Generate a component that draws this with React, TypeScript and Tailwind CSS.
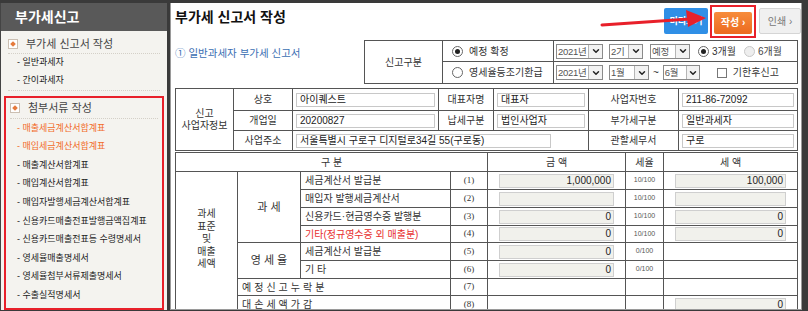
import { ChevronDown } from 'lucide-react';

const FONT = "font-['Liberation_Sans','Noto_Sans_CJK_KR',sans-serif]";
const TD = 'border border-[#555] p-0';

function Bullet() {
  return (
    <span className="w-[10px] h-[10px] border border-[#cbbfb2] bg-white flex items-center justify-center shrink-0">
      <span className="w-[4px] h-[4px] bg-[#e57a3c] rotate-45" />
    </span>
  );
}

function Select({ label, textW, btnW }: { label: string; textW: string; btnW: string }) {
  return (
    <span className="inline-flex h-[15px] border border-[#8a8a8a] bg-white whitespace-nowrap">
      <span className={`${textW} pl-[1px] text-[9.5px] tracking-[-0.3px] leading-[13px] text-[#555]`}>{label}</span>
      <span className={`${btnW} border-l border-[#b5b5b5] bg-[#f2f2f2] flex items-center justify-center`}>
        <ChevronDown className="w-[10px] h-[10px] text-[#222]" strokeWidth={3.5} />
      </span>
    </span>
  );
}

function Radio({ on, dim }: { on?: boolean; dim?: boolean }) {
  return (
    <span
      className={`w-[11px] h-[11px] rounded-full border flex items-center justify-center shrink-0 ${
        dim ? 'border-[#c8c8c8] bg-[#eee]' : 'border-[#666] bg-white'
      }`}>
      {on && <span className="w-[5px] h-[5px] rounded-full bg-[#222]" />}
    </span>
  );
}

function Field({ children, className = '' }: { children?: React.ReactNode; className?: string }) {
  return (
    <div
      className={`h-[14px] border border-[#cfcfcf] bg-[#f1f1ec] text-right pr-[2px] text-[10px] leading-[12px] text-[#222] ${className}`}>
      {children}
    </div>
  );
}

function InfoField({ children, className = '' }: { children?: React.ReactNode; className?: string }) {
  return (
    <div
      className={`h-[14px] border border-[#c8c8c8] bg-white pl-[3px] text-[10px] leading-[12px] text-[#222] whitespace-nowrap ${className}`}>
      {children}
    </div>
  );
}

const attachItems = [
  { label: '매출세금계산서합계표', active: true },
  { label: '매입세금계산서합계표', active: true },
  { label: '매출계산서합계표' },
  { label: '매입계산서합계표' },
  { label: '매입자발행세금계산서합계표' },
  { label: '신용카드매출전표발행금액집계표' },
  { label: '신용카드매출전표등 수령명세서' },
  { label: '영세율매출명세서' },
  { label: '영세율첨부서류제출명세서' },
  { label: '수출실적명세서' },
];

function Sidebar() {
  return (
    <div className="w-[167px] shrink-0 bg-[#f4f3ef] border-l border-[#444] flex flex-col">
      <div className="h-[28px] bg-[#595959] text-white text-[14px] font-bold pl-[14px] flex items-center">
        부가세신고
      </div>

      {/* 부가세 신고서 작성 */}
      <div className="px-[7px] pt-[4px]">
        <div className="h-[19px] flex items-center gap-[8px] border-b border-dotted border-[#d4d0c8]">
          <Bullet />
          <span className="text-[11px] text-[#444]">부가세 신고서 작성</span>
        </div>
        <div className="pl-[9px] text-[9px] text-[#222] border-b border-dotted border-[#d4d0c8]">
          <div className="h-[18px] flex items-center">- 일반과세자</div>
          <div className="h-[18px] flex items-center">- 간이과세자</div>
        </div>
      </div>

      {/* 첨부서류 작성 */}
      <div className="mt-[5px] mx-[3px] flex-1 border-2 border-[#e8202a]">
        <div className="mx-[4px] h-[21px] flex items-center gap-[8px] border-b border-dotted border-[#d4d0c8]">
          <Bullet />
          <span className="text-[11px] text-[#444]">첨부서류 작성</span>
        </div>
        <div className="pl-[11px] text-[9px]">
          {attachItems.map((item) => (
            <div
              key={item.label}
              className={`h-[18.6px] flex items-center ${item.active ? 'text-[#f26b2a]' : 'text-[#222]'}`}>
              - {item.label}
            </div>
          ))}
        </div>
      </div>
    </div>
  );
}

function Header() {
  return (
    <div className="h-[37px] flex items-start justify-between -mr-[3px]">
      <h1 className="pt-[4px] text-[14px] font-bold text-[#111]">부가세 신고서 작성</h1>
      <div className="flex items-center pt-[2px] gap-[2px]">
        <button className="w-[44px] h-[26px] rounded-[2px] bg-[#2f8fe6] text-white text-[9px] font-bold">미리보기</button>
        <span className="p-[2px] border-2 border-[#e8202a]">
          <button className="w-[38px] h-[22px] rounded-[2px] bg-gradient-to-b from-[#f78c3c] to-[#ec6a1e] text-white text-[10px] font-bold">
            작성 ›
          </button>
        </span>
        <button className="ml-[1px] w-[42px] h-[26px] rounded-[2px] border border-[#d5d5d5] bg-[#f0f0f0] text-[#777] text-[10px]">
          인쇄 ›
        </button>
      </div>
    </div>
  );
}

function ReportType() {
  return (
    <div className="flex items-start justify-between">
      <div className="pt-[6px] text-[10.5px] text-[#3b6fb3]">① 일반과세자 부가세 신고서</div>
      <table className="w-[434px] border-collapse table-fixed border border-[#333] text-[10px] text-[#333]">
        <colgroup>
          <col className="w-[78px]" />
          <col className="w-[111px]" />
          <col />
        </colgroup>
        <tbody>
          <tr className="h-[21px]">
            <td rowSpan={2} className={`${TD} text-center`}>신고구분</td>
            <td className={TD}>
              <div className="flex items-center gap-[6px] pl-[9px]">
                <Radio on />
                <span>예정 확정</span>
              </div>
            </td>
            <td className={TD}>
              <div className="flex items-center pl-[2px] whitespace-nowrap">
                <Select label="2021년" textW="w-[31px]" btnW="w-[14px]" />
                <span className="ml-[6px]"><Select label="2기" textW="w-[18px]" btnW="w-[14px]" /></span>
                <span className="ml-[7px]"><Select label="예정" textW="w-[24px]" btnW="w-[14px]" /></span>
                <span className="ml-[8px] flex items-center gap-[3px]">
                  <Radio on />
                  <span>3개월</span>
                </span>
                <span className="ml-[8px] flex items-center gap-[3px] text-[#444]">
                  <Radio dim />
                  <span>6개월</span>
                </span>
              </div>
            </td>
          </tr>
          <tr className="h-[22px]">
            <td className={TD}>
              <div className="flex items-center gap-[6px] pl-[9px] whitespace-nowrap">
                <Radio />
                <span>영세율등조기환급</span>
              </div>
            </td>
            <td className={TD}>
              <div className="flex items-center pl-[2px] whitespace-nowrap">
                <Select label="2021년" textW="w-[31px]" btnW="w-[14px]" />
                <span className="ml-[6px]"><Select label="1월" textW="w-[24px]" btnW="w-[14px]" /></span>
                <span className="mx-[4px]">~</span>
                <Select label="6월" textW="w-[22px]" btnW="w-[13px]" />
                <span className="ml-[17px] flex items-center gap-[6px]">
                  <span className="w-[10px] h-[10px] border border-[#777] bg-white" />
                  <span>기한후신고</span>
                </span>
              </div>
            </td>
          </tr>
        </tbody>
      </table>
    </div>
  );
}

function BusinessInfo() {
  return (
    <table className="mt-[4px] w-[623px] border-collapse table-fixed border border-[#333] text-[10px] text-[#333]">
      <colgroup>
        <col className="w-[58px]" />
        <col className="w-[59px]" />
        <col className="w-[146px]" />
        <col className="w-[55px]" />
        <col className="w-[95px]" />
        <col className="w-[90px]" />
        <col />
      </colgroup>
      <tbody>
        <tr className="h-[22px]">
          <td rowSpan={3} className={`${TD} text-center leading-[12px]`}>
            신고
            <br />
            사업자정보
          </td>
          <td className={`${TD} text-center`}>상호</td>
          <td className={`${TD} px-[3px]`}><InfoField>아이퀘스트</InfoField></td>
          <td className={`${TD} text-center`}>대표자명</td>
          <td className={`${TD} px-[3px]`}><InfoField>대표자</InfoField></td>
          <td className={`${TD} text-center`}>사업자번호</td>
          <td className={`${TD} px-[3px]`}><InfoField>211-86-72092</InfoField></td>
        </tr>
        <tr className="h-[20px]">
          <td className={`${TD} text-center`}>개업일</td>
          <td className={`${TD} px-[3px]`}><InfoField>20200827</InfoField></td>
          <td className={`${TD} text-center`}>납세구분</td>
          <td className={`${TD} px-[3px]`}><InfoField>법인사업자</InfoField></td>
          <td className={`${TD} text-center`}>부가세구분</td>
          <td className={`${TD} px-[3px]`}><InfoField>일반과세자</InfoField></td>
        </tr>
        <tr className="h-[20px]">
          <td className={`${TD} text-center`}>사업주소</td>
          <td colSpan={3} className={`${TD} px-[3px]`}>
            <InfoField className="w-[255px] text-[10.5px]">서울특별시 구로구 디지털로34길 55(구로동)</InfoField>
          </td>
          <td className={`${TD} text-center`}>관할세무서</td>
          <td className={`${TD} px-[3px]`}><InfoField>구로</InfoField></td>
        </tr>
      </tbody>
    </table>
  );
}

const NUM = "text-center font-['Liberation_Serif',serif] text-[9px] text-[#333]";
const RATE = 'text-center text-[7px] text-[#555]';

function AmountCell({ children, empty }: { children?: React.ReactNode; empty?: boolean }) {
  return <td className={`${TD} px-[11px]`}>{!empty && <Field>{children}</Field>}</td>;
}

function TaxTable() {
  return (
    <table className="mt-[1px] w-[623px] border-collapse table-fixed border border-[#333] text-[10px] text-[#333]">
      <colgroup>
        <col className="w-[62px]" />
        <col className="w-[63px]" />
        <col className="w-[150px]" />
        <col className="w-[37px]" />
        <col className="w-[138px]" />
        <col className="w-[38px]" />
        <col />
      </colgroup>
      <tbody>
        <tr className="h-[19px]">
          <td colSpan={4} className={`${TD} text-center`}>구 분</td>
          <td className={`${TD} text-center`}>금 액</td>
          <td className={`${TD} text-center`}>세율</td>
          <td className={`${TD} text-center`}>세 액</td>
        </tr>
        <tr className="h-[18px]">
          <td rowSpan={8} className={`${TD} text-center leading-[12.5px] pb-[6px]`}>
            과세
            <br />
            표준
            <br />및<br />
            매출
            <br />
            세액
          </td>
          <td rowSpan={4} className={`${TD} text-center text-[11px]`}>과 세</td>
          <td className={`${TD} pl-[4px]`}>세금계산서 발급분</td>
          <td className={`${TD} ${NUM}`}>(1)</td>
          <AmountCell>1,000,000</AmountCell>
          <td className={`${TD} ${RATE}`}>10/100</td>
          <AmountCell>100,000</AmountCell>
        </tr>
        <tr className="h-[18px]">
          <td className={`${TD} pl-[4px]`}>매입자 발행세금계산서</td>
          <td className={`${TD} ${NUM}`}>(2)</td>
          <AmountCell />
          <td className={`${TD} ${RATE}`}>10/100</td>
          <AmountCell />
        </tr>
        <tr className="h-[18px]">
          <td className={`${TD} pl-[4px]`}>신용카드·현금영수증 발행분</td>
          <td className={`${TD} ${NUM}`}>(3)</td>
          <AmountCell>0</AmountCell>
          <td className={`${TD} ${RATE}`}>10/100</td>
          <AmountCell>0</AmountCell>
        </tr>
        <tr className="h-[17px]">
          <td className={`${TD} pl-[4px] text-[#e8302f]`}>기타(정규영수증 외 매출분)</td>
          <td className={`${TD} ${NUM}`}>(4)</td>
          <AmountCell>0</AmountCell>
          <td className={`${TD} ${RATE}`}>10/100</td>
          <AmountCell>0</AmountCell>
        </tr>
        <tr className="h-[18px]">
          <td rowSpan={2} className={`${TD} text-center text-[11px]`}>영 세 율</td>
          <td className={`${TD} pl-[4px]`}>세금계산서 발급분</td>
          <td className={`${TD} ${NUM}`}>(5)</td>
          <AmountCell>0</AmountCell>
          <td className={`${TD} ${RATE}`}>0/100</td>
          <AmountCell empty />
        </tr>
        <tr className="h-[18px]">
          <td className={`${TD} pl-[4px]`}>기 타</td>
          <td className={`${TD} ${NUM}`}>(6)</td>
          <AmountCell>0</AmountCell>
          <td className={`${TD} ${RATE}`}>0/100</td>
          <AmountCell empty />
        </tr>
        <tr className="h-[17px]">
          <td colSpan={2} className={`${TD} pl-[4px] tracking-[3px]`}>예정신고누락분</td>
          <td className={`${TD} ${NUM}`}>(7)</td>
          <AmountCell empty />
          <td className={TD} />
          <AmountCell empty />
        </tr>
        <tr className="h-[18px]">
          <td colSpan={2} className={`${TD} pl-[4px] tracking-[3px]`}>대손세액가감</td>
          <td className={`${TD} ${NUM}`}>(8)</td>
          <AmountCell empty />
          <td className={TD} />
          <AmountCell>0</AmountCell>
        </tr>
      </tbody>
    </table>
  );
}

export default function App() {
  return (
    <div className={`${FONT} relative w-[808px] h-[311px] overflow-hidden bg-[#3a3a3a] pt-[3px] pb-[1px] flex`}>
      <Sidebar />

      {/* Main panel */}
      <div className="flex-1 border-l-[3px] border-r-[6px] border-[#3a3a3a] bg-white">
        <div className="h-full border-l border-r border-b border-[#9a9a9a] pl-[4px] pr-[3px] overflow-hidden">
          <Header />
          <ReportType />
          <BusinessInfo />
          <TaxTable />
        </div>
      </div>

      {/* Red pointer arrow */}
      <svg className="absolute left-[598px] top-[9px]" width="112" height="24" viewBox="0 0 112 24">
        <line x1="4" y1="16" x2="92" y2="10" stroke="#e8202a" strokeWidth="3" strokeLinecap="round" />
        <polygon points="108,9 88,1 90,18" fill="#e8202a" />
      </svg>
    </div>
  );
}
